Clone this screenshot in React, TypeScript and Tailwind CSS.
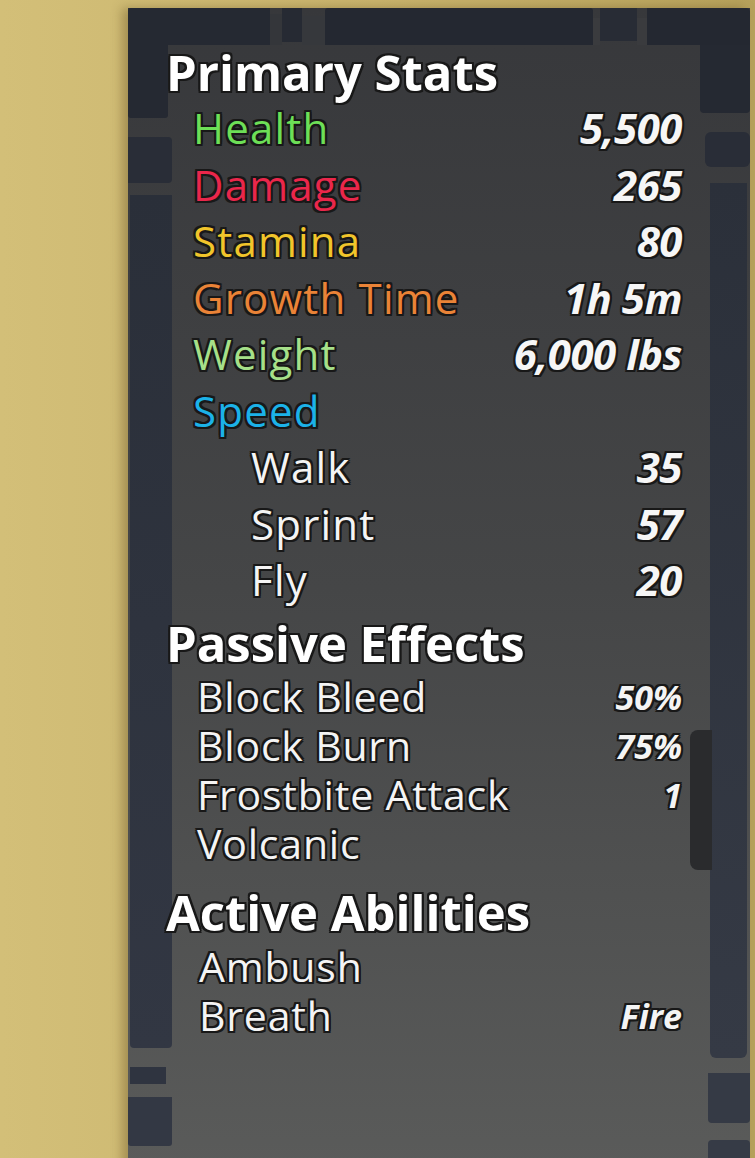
const OUT =
  "[text-shadow:0_0_2px_#111,2px_2px_0_#1a1a1a,-2px_-2px_0_#1a1a1a,2px_-2px_0_#1a1a1a,-2px_2px_0_#1a1a1a,0_2px_0_#1a1a1a,0_-2px_0_#1a1a1a,2px_0_0_#1a1a1a,-2px_0_0_#1a1a1a]";

type Row = { label: string; color: string; value: string; indent?: boolean };

const primary: Row[] = [
  { label: "Health", color: "text-[#6ddf57]", value: "5,500" },
  { label: "Damage", color: "text-[#ea274b]", value: "265" },
  { label: "Stamina", color: "text-[#f1c52b]", value: "80" },
  { label: "Growth Time", color: "text-[#ea8337]", value: "1h 5m" },
  { label: "Weight", color: "text-[#a6e089]", value: "6,000 lbs" },
  { label: "Speed", color: "text-[#1cb2e8]", value: "" },
  { label: "Walk", color: "text-[#f4f4f4]", value: "35", indent: true },
  { label: "Sprint", color: "text-[#f4f4f4]", value: "57", indent: true },
  { label: "Fly", color: "text-[#f4f4f4]", value: "20", indent: true },
];

const passive = [
  { label: "Block Bleed", value: "50%" },
  { label: "Block Burn", value: "75%" },
  { label: "Frostbite Attack", value: "1" },
  { label: "Volcanic", value: "" },
];

const active = [
  { label: "Ambush", value: "" },
  { label: "Breath", value: "Fire" },
];

function Header({ text, cls }: { text: string; cls: string }) {
  return (
    <div className={`flex items-center -ml-[6px] text-[49px] font-bold leading-none text-white ${OUT} ${cls}`}>
      {text}
    </div>
  );
}

export default function App() {
  return (
    <div className="relative h-[1158px] w-[755px] overflow-hidden bg-linear-to-r from-[#d3bf78] via-[#c9b46d] to-[#b7a25c] font-['Open_Sans',sans-serif]">
      <div className="ml-[128px] mt-[8px] flex h-[1160px] w-[622px] flex-col bg-linear-to-b from-[#37383b] via-[#454647] to-[#5a5b5a] shadow-[-6px_0_10px_rgba(80,60,20,0.35)]">
        {/* top border */}
        <div className="flex h-[37px] shrink-0">
          <div className="h-full w-[142px] rounded-tl-[3px] bg-[#252932]" />
          <div className="mt-[6px] h-[31px] w-[12px] bg-[#34363a]" />
          <div className="h-[34px] w-[20px] bg-[#262a33]" />
          <div className="mt-[8px] h-[29px] w-[23px] bg-[#36383c]" />
          <div className="h-full w-[268px] rounded-t-[3px] bg-[#242831]" />
          <div className="mt-[10px] h-[27px] w-[7px] bg-[#3a3b3e]" />
          <div className="h-[33px] w-[37px] bg-[#282c35]" />
          <div className="mt-[10px] h-[27px] w-[10px] bg-[#3a3b3e]" />
          <div className="h-full flex-1 rounded-tr-[4px] bg-[#242831]" />
        </div>

        <div className="flex flex-1">
          {/* left border */}
          <div className="flex w-[44px] shrink-0 flex-col">
            <div className="h-[73px] w-[40px] rounded-b-[3px] bg-[#252932]" />
            <div className="h-[19px]" />
            <div className="h-[46px] rounded-r-[4px] bg-[#292d37]" />
            <div className="h-[12px]" />
            <div className="ml-[2px] h-[853px] rounded-b-[4px] bg-linear-to-b from-[#2a2f39] to-[#323743]" />
            <div className="h-[19px]" />
            <div className="ml-[2px] h-[17px] w-[36px] bg-[#2f3440]" />
            <div className="h-[13px]" />
            <div className="h-[49px] rounded-b-[3px] bg-[#333844]" />
          </div>

          {/* content */}
          <div className="flex-1 text-[#f4f4f4]">
            <Header text="Primary Stats" cls="h-[55px]" />
            {primary.map((r) => (
              <div key={r.label} className="flex h-[56.5px] items-center justify-between pr-[23px]">
                <span className={`${r.indent ? "pl-[79px]" : "pl-[21px]"} text-[42px] leading-none tracking-[1.2px] ${r.color} ${OUT}`}>
                  {r.label}
                </span>
                <span className={`text-[42px] font-bold italic leading-none tracking-[-0.5px] text-[#f6f6f6] ${OUT}`}>
                  {r.value}
                </span>
              </div>
            ))}
            <Header text="Passive Effects" cls="h-[63.5px] pt-[6px]" />
            {passive.map((r) => (
              <div key={r.label} className="flex h-[49px] items-center justify-between pr-[23px]">
                <span className={`pl-[25px] text-[41px] leading-none tracking-[0.8px] ${OUT}`}>{r.label}</span>
                <span className={`text-[34px] font-bold italic leading-none ${OUT}`}>{r.value}</span>
              </div>
            ))}
            <Header text="Active Abilities" cls="h-[74px] pt-[15px]" />
            {active.map((r) => (
              <div key={r.label} className="flex h-[49px] items-center justify-between pr-[23px]">
                <span className={`pl-[27px] text-[41px] leading-none tracking-[0.8px] ${OUT}`}>{r.label}</span>
                <span className={`text-[34px] font-bold italic leading-none ${OUT}`}>{r.value}</span>
              </div>
            ))}
          </div>

          {/* right border */}
          <div className="flex w-[45px] shrink-0 flex-col">
            <div className="-ml-[5px] h-[68px] rounded-b-[4px] bg-[#252932]" />
            <div className="h-[19px]" />
            <div className="h-[35px] rounded-[6px] bg-[#292d37]" />
            <div className="h-[16px]" />
            <div className="relative ml-[5px] mr-[3px] h-[875px] rounded-b-[6px] bg-linear-to-b from-[#2b303a] to-[#353a45]">
              <div className="absolute -left-[20px] top-[547px] h-[140px] w-[22px] rounded-l-[8px] bg-[#2a2b2d]" />
            </div>
            <div className="h-[15px]" />
            <div className="ml-[3px] h-[50px] rounded-b-[4px] bg-[#353a45]" />
            <div className="h-[17px]" />
            <div className="ml-[3px] h-[40px] rounded-t-[4px] bg-[#363b46]" />
          </div>
        </div>
      </div>
    </div>
  );
}
